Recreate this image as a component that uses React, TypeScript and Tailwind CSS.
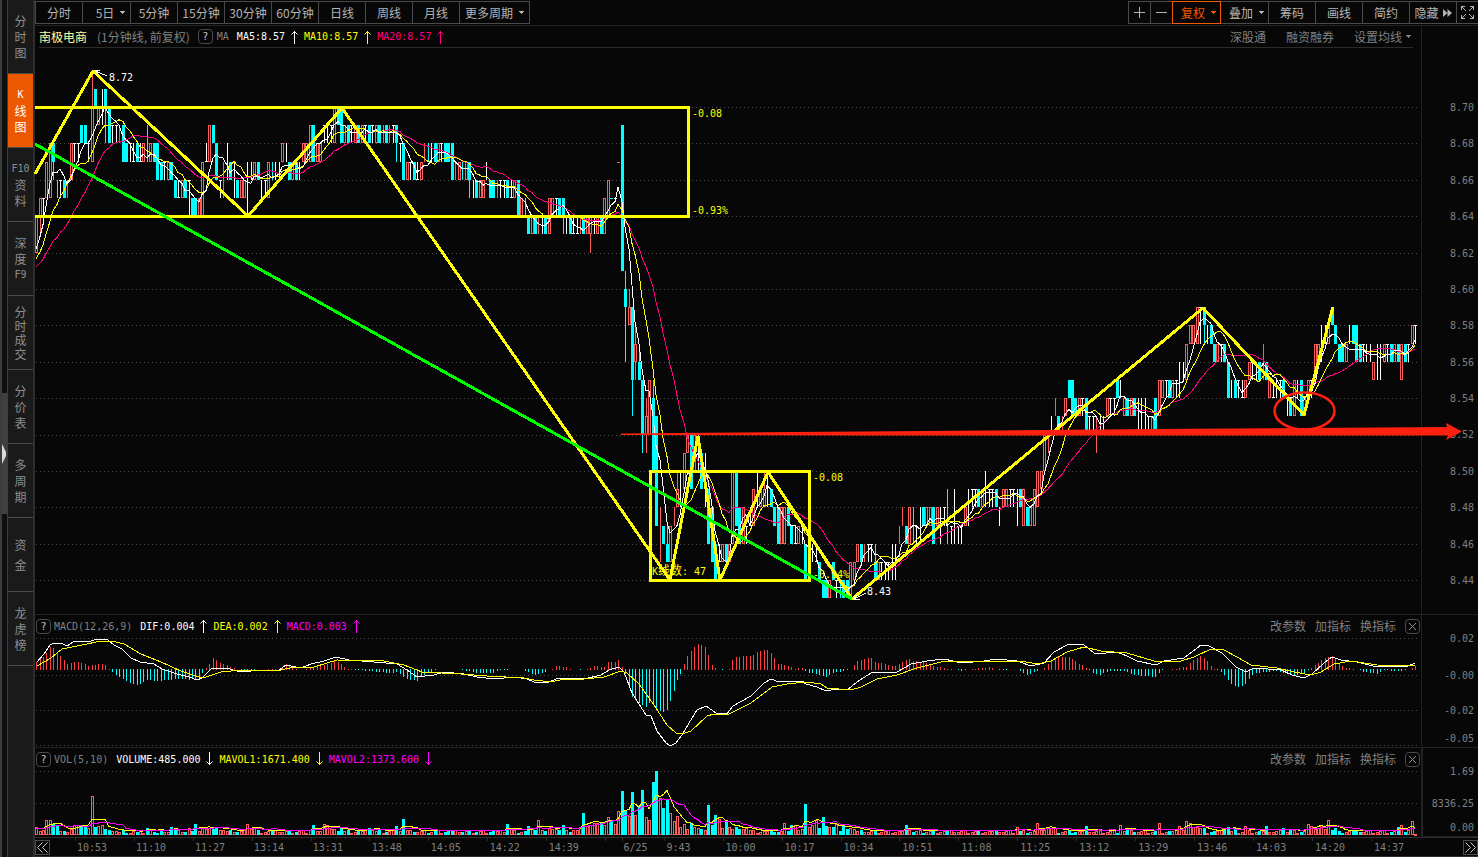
import React from 'react';

// Chart space: one unit is one pixel on a 1386 wide plot that starts at x = 35
const PLOT_X = 35;
const PLOT_W = 1386;
const PRICE_TOP = 48;
const PRICE_H = 566;
const MACD_TOP = 637;
const MACD_H = 110;
const VOL_TOP = 770;
const VOL_H = 67;

const UI = "font-['Noto_Sans_CJK_SC',sans-serif] text-xs";
const MONO = "font-['DejaVu_Sans_Mono','Noto_Sans_CJK_SC',monospace] text-[10px]";

type Point = [number, number];

interface Candle {
  kind: string;
  lo: number;
  hi: number;
  wickLo: number;
  wickHi: number;
  close: number;
}

// kind + low.high in cents above 8.40, optional +low.high for the wick
// r hollow up, h filled down, T/B doji with its bar at top/bottom, w/c/m plain lines
const CANDLES = `
r22.24 r24.25+23.25 T24.25 r25.27 r25.28 h27.28+26.28 c25.26 T25.26 h25.26 m25.26
r26.28 T27.28 T27.28 h28.29 h28.29 T27.28 r27.30+27.32 h30.31 r29.30 w29.31
h30.31+28.31 h28.30 T28.29 T28.29 m28.29 h27.29 h27.28 T27.28 B27.28 h27.28
B27.28 r27.28 c27.29 r27.28 h27.28 h26.28 h26.27 T26.27 r26.27 h26.27
h25.26 B25.26 r25.26 h25.26 T24.26 h24.25 h24.25 r24.25 r24.27 B27.28
r27.29 h28.29 h26.28 T25.26 m25.27 w26.28 h26.27 T25.27 h25.26 r25.26
r25.26 w24.27 w26.27 r26.27 h26.27 w25.26 T25.26 r25.27 c26.27 w26.27
B26.27 r27.28 w27.28 h26.27 r26.27 h26.27 w26.27 r27.28 r27.28 r27.29
h27.29 r27.28 r27.28 T28.29 T28.29 T28.29 r28.30 h29.30 h28.30 r28.29
h28.29 T28.29 r28.29 h28.29 r28.29 T28.29 h28.29 T28.29 r28.29 h28.29
m28.29 h28.29 m28.29 T28.29 h28.29+27.29 T27.28 h26.28 r26.27 T26.27 h26.27
B26.27 r26.27 m27.28 c27.28 w27.28 h27.28 r27.28 T27.28 h27.28 h27.28
h26.28 m26.27 r26.27 c26.27 r26.27 h26.27+25.27 w25.26 h25.26 r25.26 r25.26
w26.27 h25.26 h25.26 m25.26 T25.26 T25.26 h25.26 B25.26 r25.26 h24.26
r24.25 c24.25 h23.24 r23.24 h23.24 m23.24 w23.24 h23.24 r23.25 r24.25
T24.25 h24.25 h24.25+23.25 T23.24 h23.24 B23.24 B23.24 m23.24 h23.24 r23.24
r23.24+22.24 w23.24 r23.24 h23.24 r23.25 r24.26 c25.25 w25.25 m27.27 h21.29
h19.20+16.21 r18.19+18.20 h15.19+13.19 r16.17+15.18 h15.16+15.17 h12.15+11.15 r12.13+11.14 r12.15 h10.14+10.15 h7.13
m5.8 h6.7 h5.6+5.7 r5.7 m7.8 r8.9+8.10 w8.10 r9.11 r11.12 h9.12
r10.12 w10.12 h9.11 w8.11 h6.9 h5.8 h4.6 B5.6 r5.6 h5.6
r5.6 r6.10 h7.10 h6.8 r6.8 T6.7 B7.8 r7.9 w8.10 r8.9
r8.9+8.10 T8.10 h8.9 h7.8 h6.8 r6.8 r6.8 h7.8 h6.7 B6.7
r6.7 T6.7 h4.6 w4.6 w5.6 B5.6 h4.5 h3.4 h3.4 r3.4
h4.5 T3.4 c3.4 h3.4 h3.4 r3.5 r4.5 r5.6 h5.6 m5.6
T5.6 T5.6 h4.5+4.6 r4.5 T4.5 T4.5 T4.5 w4.6 w4.6 m6.7
m7.8 h6.7 r6.8 c6.8 T6.7 w6.8 h7.8 r7.8 r7.8 h6.8
r7.8 w6.8 T7.8 c6.9 T6.7 w6.9 T6.7 T6.7 r7.8 w7.9
T8.9 T8.9 h8.9 r8.9 w8.10 T8.9 T8.9 h8.9 w7.8 r8.9
r8.9 T8.9 T8.9 w7.9 h8.9 r7.9 h7.8 r7.8 r7.9 r8.10
r9.10 r10.12 m11.12 w12.13 m13.14 h12.13 m12.13 r13.14 h14.15 h13.15
h13.14 r13.14 T13.14 h12.14 T12.13 T12.13 m11.13 B12.13 B12.13 r13.14
T13.14 T13.14 h14.15 w14.15 r13.14 h13.14 r13.14 h13.14 w12.14 w12.14
w12.14 T12.13 r12.13 h12.14 r13.15 r14.15 T14.15 h14.15 r14.15 T14.15
w14.16 w15.16 r15.17 r17.18 r17.18 r17.19 T17.19 h18.19+17.19 w17.18 h17.18
h16.17 r16.17 T16.17 h16.17 h14.16 w14.15 h14.15 T14.15 B14.15 r14.15
r15.16 T15.16 w15.16 h15.16 m15.17 h15.16 r14.15 B14.15 w14.15 T14.15
h14.15 w13.14 h13.14 r13.15 w14.15 h13.15 r13.14 r14.15 T14.15 r15.17
r16.17 w16.18 w17.18 r17.18 h18.19 h17.18 h16.17 h16.17 r16.17 w17.18
h17.18 h16.18 h16.17 T16.17 w16.17 w16.17 r15.16 w15.17 w15.17 r16.17
T16.17 h16.17 r16.17 h16.17 r15.17 h16.17 T16.17 r17.18 T17.18
`;

const parseCandle = (token: string): Candle => {
  const kind = token[0];
  const [body, wick] = token.slice(1).split('+');
  const [lo, hi] = body.split('.').map(Number);
  const [wickLo, wickHi] = wick ? wick.split('.').map(Number) : [lo, hi];
  let close = (lo + hi) / 2;
  if ('rTm'.includes(kind)) close = hi;
  if ('hBc'.includes(kind)) close = lo;
  return { kind, lo, hi, wickLo, wickHi, close };
};

const candles = CANDLES.trim().split(/\s+/).map(parseCandle);

const barX = (i: number) => Math.floor(36.6 + i * 3.4645);
const priceY = (cents: number) => Math.round(107 + (30 - cents) * 18.2);

// closes before the first visible bar, so the averages have a history
const HISTORY = [
  20.7, 20.7, 20.7, 20.7, 20.7, 20.8, 20.8, 20.8, 20.8, 20.8,
  21.1, 21.1, 21.1, 21.1, 21.1, 21.6, 21.7, 21.8, 21.9,
];

const average = (values: number[], history: number[], span: number) => {
  const all = [...history, ...values];
  return values.map((_, i) => {
    const end = i + history.length + 1;
    const part = all.slice(Math.max(0, end - span), end);
    return part.reduce((sum, v) => sum + v, 0) / part.length;
  });
};

const closes = candles.map(c => c.close);
const maLine = (span: number) =>
  average(closes, HISTORY, span)
    .map((v, i) => `${barX(i)},${107 + (30 - v) * 18.2}`)
    .join(' ');

const DIF: Point[] = [
  [37, 662], [44, 654], [50, 645], [54, 643], [61, 643], [67, 646], [73, 642], [81, 641], [89, 642], [96, 639],
  [107, 639], [114, 645], [122, 649], [131, 658], [140, 662], [154, 664], [162, 669], [177, 674], [189, 677], [197, 680],
  [202, 678], [211, 669], [226, 668], [237, 671], [251, 671], [279, 670], [286, 665], [301, 668], [311, 664], [324, 661],
  [336, 657], [349, 660], [374, 662], [397, 664], [407, 670], [417, 677], [434, 675], [444, 672], [464, 674], [477, 677],
  [494, 679], [514, 677], [527, 679], [534, 682], [547, 683], [556, 679], [567, 678], [584, 679], [601, 675], [609, 670],
  [619, 667], [624, 672], [632, 693], [646, 715], [651, 716], [657, 731], [666, 743], [670, 746], [676, 743], [682, 735],
  [689, 723], [697, 710], [706, 706], [716, 713], [727, 714], [733, 706], [751, 696], [764, 683], [771, 679], [779, 682],
  [802, 681], [806, 684], [817, 687], [826, 691], [836, 689], [847, 690], [857, 682], [871, 673], [897, 672], [911, 664],
  [927, 661], [944, 659], [962, 663], [984, 661], [996, 659], [1017, 661], [1031, 666], [1044, 663], [1054, 652], [1069, 644],
  [1084, 645], [1094, 653], [1106, 653], [1117, 652], [1127, 656], [1137, 661], [1156, 665], [1164, 661], [1184, 658], [1201, 645],
  [1209, 646], [1222, 653], [1236, 667], [1246, 672], [1254, 668], [1281, 670], [1292, 675], [1304, 678], [1312, 674], [1324, 663],
  [1332, 657], [1341, 660], [1357, 662], [1377, 667], [1387, 666], [1406, 667], [1415, 663],
];

const DEA: Point[] = [
  [37, 666], [51, 658], [62, 649], [82, 645], [101, 641], [112, 641], [124, 644], [141, 654], [161, 662], [181, 671],
  [199, 677], [206, 677], [221, 672], [241, 670], [281, 670], [294, 667], [314, 667], [337, 660], [384, 661], [404, 665],
  [422, 672], [461, 674], [487, 676], [524, 678], [534, 680], [551, 682], [564, 679], [584, 679], [604, 677], [621, 671],
  [627, 673], [639, 684], [654, 705], [667, 725], [676, 733], [682, 734], [691, 731], [707, 716], [714, 714], [729, 714],
  [751, 703], [772, 687], [787, 684], [806, 682], [821, 684], [827, 688], [851, 690], [861, 687], [877, 679], [897, 675],
  [917, 668], [941, 662], [984, 661], [1021, 661], [1037, 664], [1051, 661], [1067, 652], [1084, 647], [1101, 651], [1127, 653],
  [1154, 661], [1181, 661], [1194, 657], [1211, 649], [1224, 650], [1237, 657], [1251, 665], [1277, 668], [1294, 672], [1311, 675],
  [1321, 672], [1334, 664], [1351, 661], [1377, 665], [1415, 666],
];

// histogram heights, positive above the zero line
const HIST: Point[] = [
  [36, 8], [43, 13], [50, 23], [54, 21], [61, 13], [67, 6], [75, 8], [82, 7], [88, 4], [94, 5], [101, 6], [107, 4],
  [110, -1], [118, -8], [131, -14], [138, -16], [148, -11], [158, -12], [170, -11], [180, -10], [190, -11], [198, -9],
  [205, 0], [213, 12], [218, 8], [226, 5], [240, -1], [252, -1], [270, 1], [280, 0], [286, 6], [293, 2], [302, -1],
  [310, 3], [322, 4], [335, 9], [339, 7], [346, 2], [356, -1], [380, -3], [390, -4], [398, -3], [405, -10], [417, -12],
  [423, -6], [437, 0], [460, 0], [475, -4], [494, -4], [500, -1], [520, 0], [534, -6], [545, -3], [556, 4], [566, 3],
  [570, 1], [580, -1], [595, 4], [603, 2], [608, 8], [615, 8], [619, 11], [624, -2], [632, -28], [645, -39], [651, -31],
  [657, -41], [663, -43], [667, -41], [670, -32], [674, -22], [677, -11], [681, -3], [684, 6], [688, 16], [695, 24],
  [698, 26], [706, 23], [708, 15], [712, 5], [716, 1], [720, -1], [729, 1], [733, 13], [751, 14], [761, 20], [767, 20],
  [771, 17], [778, 6], [787, 5], [794, 1], [802, 2], [806, -3], [817, -5], [826, -8], [831, -4], [846, -2], [851, 1],
  [857, 9], [870, 13], [874, 8], [894, 4], [909, 11], [914, 9], [924, 8], [934, 4], [949, 1], [961, -2], [967, 0],
  [989, 3], [1000, -1], [1017, 0], [1027, -6], [1037, -2], [1044, 2], [1051, 9], [1059, 13], [1069, 13], [1079, 6],
  [1085, 3], [1091, -3], [1099, -6], [1109, -2], [1124, -2], [1134, -6], [1156, -8], [1162, -1], [1174, 1], [1186, 3],
  [1194, 11], [1201, 14], [1207, 9], [1214, 1], [1222, -4], [1232, -16], [1240, -19], [1246, -14], [1254, -4],
  [1277, -2], [1292, -7], [1306, -3], [1309, 0], [1316, 6], [1326, 13], [1332, 14], [1339, 6], [1344, 2], [1354, 1],
  [1364, -3], [1377, -5], [1384, -1], [1397, -2], [1406, -1], [1409, 0], [1415, 4],
];

const sample = (points: Point[], x: number) => {
  const next = points.findIndex(p => p[0] >= x);
  if (next <= 0) return next === 0 ? points[0][1] : points[points.length - 1][1];
  const [x0, y0] = points[next - 1];
  const [x1, y1] = points[next];
  return y0 + ((y1 - y0) * (x - x0)) / (x1 - x0);
};

// runs of volume heights, keyed by the index of their first bar
const VOLUME_RUNS: Record<number, number[]> = {
  0: [8, 4, 5, 15, 15, 11, 9, 4, 4, 3, 6, 10, 10, 9, 8, 7, 39, 8, 9, 10, 6, 5, 4, 4, 3, 5, 2, 2, 4, 3, 4, 2, 7, 5, 3],
  36: [6, 3, 3, 8, 6, 5, 3, 3, 7, 4, 11, 4, 8, 6, 7, 6, 7, 5, 5],
  61: [11, 6, 7, 5],
  79: [5, 10, 4, 4, 11, 10, 6, 6, 4, 7],
  96: [7, 5],
  104: [9, 4, 16, 5, 5],
  136: [11, 6],
  142: [9, 6, 5, 15, 5, 4, 7, 6, 6, 5, 10, 5, 3, 5, 5, 8, 22, 9, 10, 12, 12, 13, 10, 18, 15, 11, 10],
  168: [24, 44, 24, 19, 43, 20, 29, 45, 18, 15, 53, 64, 37, 27, 36, 22, 14, 19, 8, 11, 6, 12, 8, 7, 6, 5, 30, 10, 20, 16, 7, 13, 8, 6, 8, 6, 6, 7, 5],
  216: [12, 4, 10, 10, 5, 6, 31, 8, 10, 15, 7, 18, 9, 8, 8, 11, 4, 10, 6, 7, 6],
  251: [10, 5],
  283: [8], 289: [12, 5, 5, 7, 7, 7], 303: [9], 313: [10, 4, 6], 324: [12],
  330: [9, 5, 14, 12, 8, 8, 7, 7], 343: [7, 8, 4, 7], 349: [9], 355: [9], 360: [7, 3, 5],
  367: [11, 9, 6, 7, 10, 6, 15, 5, 7, 4], 393: [8, 10, 3, 5, 14, 1],
};

const volumes = candles.map((_, i) => 2 + ((i * 29) % 13) / 4);
Object.entries(VOLUME_RUNS).forEach(([start, run]) => {
  run.forEach((v, k) => {
    volumes[Number(start) + k] = v;
  });
});

const volLine = (span: number) =>
  average(volumes, [5, 5, 5, 5, 5, 5, 5, 5, 5], span)
    .map((v, i) => `${barX(i)},${835 - v - 1}`)
    .join(' ');

const toPoints = (points: Point[]) => points.map(p => p.join(',')).join(' ');

const ZIGZAG = '35,174 93,71 248,216 342,108 670,580 698,436 720,580 768,472 852,599 1203,308 1304,415 1333,307';
const PRICES = ['8.70', '8.68', '8.66', '8.64', '8.62', '8.60', '8.58', '8.56', '8.54', '8.52', '8.50', '8.48', '8.46', '8.44'];

const SIDE_TABS = [
  { chars: ['分', '时', '图'], leading: 'leading-4' },
  { chars: ['K', '线', '图'], leading: 'leading-4' },
  { chars: ['F10', '资', '料'], leading: 'leading-4' },
  { chars: ['深', '度', 'F9'], leading: 'leading-4' },
  { chars: ['分', '时', '成', '交'], leading: 'leading-[14px]' },
  { chars: ['分', '价', '表'], leading: 'leading-4' },
  { chars: ['多', '周', '期'], leading: 'leading-4' },
  { chars: ['资', '金'], leading: 'leading-5' },
  { chars: ['龙', '虎', '榜'], leading: 'leading-4' },
];

const PERIODS = [
  { label: '分时', width: 'w-[47px]' },
  { label: '5日', width: 'w-12', menu: true },
  { label: '5分钟', width: 'w-[47px]' },
  { label: '15分钟', width: 'w-[47px]' },
  { label: '30分钟', width: 'w-[47px]' },
  { label: '60分钟', width: 'w-[47px]' },
  { label: '日线', width: 'w-[47px]' },
  { label: '周线', width: 'w-[47px]' },
  { label: '月线', width: 'w-[47px]' },
];

const TIMES = [
  { label: '10:53', grow: 'grow-[59]' }, { label: '11:10', grow: 'grow-[59]' }, { label: '11:27', grow: 'grow-[59]' },
  { label: '13:14', grow: 'grow-[59]' }, { label: '13:31', grow: 'grow-[59]' }, { label: '13:48', grow: 'grow-[59]' },
  { label: '14:05', grow: 'grow-[59]' }, { label: '14:22', grow: 'grow-[59]' }, { label: '14:39', grow: 'grow-[75]' },
  { label: '6/25', grow: 'grow-[43]' }, { label: '9:43', grow: 'grow-[59]' }, { label: '10:00', grow: 'grow-[59]' },
  { label: '10:17', grow: 'grow-[59]' }, { label: '10:34', grow: 'grow-[59]' }, { label: '10:51', grow: 'grow-[59]' },
  { label: '11:08', grow: 'grow-[59]' }, { label: '11:25', grow: 'grow-[59]' }, { label: '13:12', grow: 'grow-[59]' },
  { label: '13:29', grow: 'grow-[59]' }, { label: '13:46', grow: 'grow-[59]' }, { label: '14:03', grow: 'grow-[59]' },
  { label: '14:20', grow: 'grow-[59]' }, { label: '14:37', grow: 'grow-[59]' },
];

const TICKS = [75, 134, 193, 252, 311, 369, 428, 487, 546, 605, 622, 664, 723, 782, 841, 899, 958, 1017, 1076, 1135, 1194, 1253, 1312, 1371];

const Caret = () => (
  <svg width="5" height="3" viewBox="0 0 5 3" shapeRendering="crispEdges" className="shrink-0 fill-current">
    <path d="M0 0h5v1h-1v1h-1v1h-1v-1h-1v-1h-1z" />
  </svg>
);

const TrendArrow: React.FC<{ down?: boolean; className: string }> = ({ down, className }) => (
  <svg width="7" height="14" viewBox="0 0 7 14" fill="none" className={`shrink-0 stroke-current ${className}`}>
    <path d={down ? 'M3.5 0V13M0.5 9.5L3.5 12.5L6.5 9.5' : 'M3.5 1V14M0.5 4.5L3.5 1.5L6.5 4.5'} />
  </svg>
);

const HelpButton = () => (
  <button aria-label="帮助" className={`${MONO} flex size-[15px] shrink-0 items-center justify-center rounded-sm border border-[#4a4a4a] text-[#c8c8c8]`}>?</button>
);

const GridLines: React.FC<{ rows: number[] }> = ({ rows }) => (
  <g stroke="#4c4c4c" strokeDasharray="1 3">
    {rows.map(y => <line key={y} x1="36" x2="1418" y1={y + 0.5} y2={y + 0.5} />)}
  </g>
);

const CandleMark: React.FC<{ candle: Candle; x: number }> = ({ candle, x }) => {
  const { kind, lo, hi, wickLo, wickHi } = candle;
  const top = priceY(hi);
  const height = priceY(lo) - top;
  const color = 'rm'.includes(kind) ? '#ff5c5c' : 'hc'.includes(kind) ? '#00ffff' : '#ffffff';
  if (height === 0) return <rect x={x - 1} y={top} width="3" height="1" fill={color} />;
  if (kind === 'r') {
    return (
      <g fill="none" stroke={color}>
        <rect x={x - 0.5} y={top + 0.5} width="2" height={height - 1} />
        {wickHi > hi && <line x1={x + 0.5} x2={x + 0.5} y1={priceY(wickHi)} y2={top} />}
        {wickLo < lo && <line x1={x + 0.5} x2={x + 0.5} y1={top + height} y2={priceY(wickLo)} />}
      </g>
    );
  }
  return (
    <g fill={color}>
      {kind === 'h' && <rect x={x - 1} y={top} width="3" height={height} />}
      <rect x={x} y={priceY(wickHi)} width="1" height={priceY(wickLo) - priceY(wickHi)} />
      {kind === 'T' && <rect x={x - 1} y={top} width="3" height="1" />}
      {kind === 'B' && <rect x={x - 1} y={top + height - 1} width="3" height="1" />}
    </g>
  );
};

interface PlotLabelProps {
  x: number;
  y: number;
  color: string;
  children: React.ReactNode;
}

const PlotLabel: React.FC<PlotLabelProps> = ({ x, y, color, children }) => (
  <span
    className={`${MONO} absolute -translate-y-1/2 leading-none whitespace-nowrap ${color}`}
    style={{ left: `${((x - PLOT_X) / PLOT_W) * 100}%`, top: `${((y - PRICE_TOP) / PRICE_H) * 100}%` }}
  >
    {children}
  </span>
);

const PricePlot = () => (
  <div className="pointer-events-none relative z-10 min-h-0 flex-1">
    <PlotLabel x={652} y={571} color="text-[#ffff00]">K<span className="text-xs leading-none">线数</span>: 47</PlotLabel>
    <svg viewBox={`${PLOT_X} ${PRICE_TOP} ${PLOT_W} ${PRICE_H}`} preserveAspectRatio="none" shapeRendering="crispEdges" className="absolute inset-0 h-full w-full overflow-visible">
      <GridLines rows={PRICES.map((_, i) => priceY(30 - i * 2))} />
      {candles.map((candle, i) => <CandleMark key={i} candle={candle} x={barX(i)} />)}
      <g fill="none">
        <polyline points={maLine(20)} stroke="#ff0080" />
        <polyline points={maLine(10)} stroke="#ffff00" />
        <polyline points={maLine(5)} stroke="#ffffff" />
      </g>
      {/* Drawn trend lines and ranges */}
      <g fill="none" stroke="#ffff00" strokeWidth="3">
        <path d="M35 107.5H688.5V216.5H35" />
        <rect x="650.5" y="471.5" width="159" height="109" />
        <polyline points={ZIGZAG} strokeLinejoin="bevel" />
      </g>
      <path d="M35 144L852 599" stroke="#00ff00" strokeWidth="3" />
      <path d="M107 76L95 71M95 71l5-1M95 71l4 4M866 593L854 599M854 599l3-4M854 599l6 0" stroke="#ffffff" fill="none" />
      <g shapeRendering="auto">
        <ellipse cx="1304.5" cy="411" rx="30" ry="18.5" fill="none" stroke="#ff2010" strokeWidth="2.5" />
        <path d="M621 433.5L860 431.5L1150 429L1447 427L1446 423L1462 431.5L1446 440L1448 435.5H860L621 435Z" fill="#ff2010" />
      </g>
    </svg>
    <PlotLabel x={109} y={78} color="text-white">8.72</PlotLabel>
    <PlotLabel x={692} y={114} color="text-[#ffff00]">-0.08</PlotLabel>
    <PlotLabel x={692} y={211} color="text-[#ffff00]">-0.93%</PlotLabel>
    <PlotLabel x={813} y={478} color="text-[#ffff00]">-0.08</PlotLabel>
    <PlotLabel x={813} y={575} color="text-[#ffff00]">-0.94%</PlotLabel>
    <PlotLabel x={867} y={592} color="text-white">8.43</PlotLabel>
  </div>
);

const MacdPlot = () => (
  <svg viewBox={`${PLOT_X} ${MACD_TOP} ${PLOT_W} ${MACD_H}`} preserveAspectRatio="none" shapeRendering="crispEdges" className="h-[110px] w-full">
    <GridLines rows={[638, 675, 710, 745]} />
    {candles.map((_, i) => {
      const h = Math.round(sample(HIST, barX(i)));
      if (h === 0) return null;
      return <rect key={i} x={barX(i)} y={h > 0 ? 670 - h : 669} width="1" height={Math.abs(h)} fill={h > 0 ? '#ff4040' : '#00ffff'} />;
    })}
    <polyline points={toPoints(DIF)} fill="none" stroke="#ffffff" />
    <polyline points={toPoints(DEA)} fill="none" stroke="#ffff00" />
  </svg>
);

const VolumePlot = () => (
  <svg viewBox={`${PLOT_X} ${VOL_TOP} ${PLOT_W} ${VOL_H}`} preserveAspectRatio="none" shapeRendering="crispEdges" className="h-[67px] w-full">
    <GridLines rows={[771, 803, 834]} />
    {volumes.map((v, i) => {
      const h = Math.round(v);
      const falling = 'hc'.includes(candles[i].kind);
      return falling
        ? <rect key={i} x={barX(i) - 1} y={835 - h} width="3" height={h} fill="#00ffff" />
        : <rect key={i} x={barX(i) - 0.5} y={835.5 - h} width="2" height={Math.max(1, h - 1)} fill="none" stroke="#ff5c5c" />;
    })}
    <polyline points={volLine(5)} fill="none" stroke="#ffff00" />
    <polyline points={volLine(10)} fill="none" stroke="#ff00ff" />
  </svg>
);

const PanelActions = () => (
  <div className={`${UI} ml-auto flex items-center gap-[9px] text-[#808080]`}>
    <button>改参数</button>
    <button>加指标</button>
    <button>换指标</button>
    <button aria-label="关闭" className="flex size-[15px] items-center justify-center rounded-sm border border-[#4a4a4a]">
      <svg width="9" height="9" viewBox="0 0 9 9" className="stroke-[#909090]"><path d="M1 1l7 7M8 1l-7 7" /></svg>
    </button>
  </div>
);

const Sidebar = () => (
  <nav className="flex w-[27px] shrink-0 flex-col border-r-2 border-[#2e2e2e] bg-[#1a1a1a]">
    {SIDE_TABS.map((tab, i) => (
      <button
        key={i}
        className={`${UI} flex h-[74px] w-full shrink-0 flex-col items-center justify-center border-b border-[#4c4c4c] ${tab.leading} ${
          i === 1 ? 'bg-[#ec5800] text-white' : 'text-[#8e8e8e]'
        }`}
      >
        {tab.chars.map((char, k) => (
          <span key={k} className={char.charCodeAt(0) < 128 ? MONO + ' leading-4' : ''}>{char}</span>
        ))}
      </button>
    ))}
  </nav>
);

const Toolbar = () => (
  <header className="flex h-[26px] shrink-0 items-start justify-between border-b border-[#222222] pt-px">
    <div className="flex h-[23px] border border-[#4a4a4a]">
      {PERIODS.map(period => (
        <button key={period.label} className={`${UI} flex items-center justify-center gap-1.5 border-r border-[#4a4a4a] text-[#b4b4b4] ${period.width} ${period.menu ? 'pl-2' : ''}`}>
          {period.label}
          {period.menu && <Caret />}
        </button>
      ))}
      <button className={`${UI} flex w-[69px] items-center justify-center gap-1.5 text-[#b4b4b4]`}>更多周期<Caret /></button>
    </div>
    <div className="flex h-[23px] border border-r-0 border-[#4a4a4a] text-[#b4b4b4]">
      <button aria-label="放大" className="flex w-[22px] items-center justify-center border-r border-[#4a4a4a]">
        <svg width="11" height="11" viewBox="0 0 11 11" shapeRendering="crispEdges" className="stroke-current"><path d="M5.5 0v11M0 5.5h11" /></svg>
      </button>
      <button aria-label="缩小" className="flex w-[21px] items-center justify-center">
        <svg width="11" height="11" viewBox="0 0 11 11" shapeRendering="crispEdges" className="stroke-current"><path d="M0 5.5h11" /></svg>
      </button>
      <button className={`${UI} -my-px flex w-[49px] items-center justify-center gap-1.5 border border-[#f05a00] pl-1 text-[#f05a00]`}>复权<Caret /></button>
      <button className={`${UI} flex w-12 items-center justify-center gap-1.5 border-r border-[#4a4a4a] pl-1`}>叠加<Caret /></button>
      <button className={`${UI} w-[47px] border-r border-[#4a4a4a]`}>筹码</button>
      <button className={`${UI} w-[47px] border-r border-[#4a4a4a]`}>画线</button>
      <button className={`${UI} w-[47px] border-r border-[#4a4a4a]`}>简约</button>
      <button className={`${UI} flex w-[47px] items-center justify-center gap-1 border-r border-[#4a4a4a]`}>
        隐藏
        <svg width="9" height="8" viewBox="0 0 9 8" className="fill-current"><path d="M0 0l4.5 4L0 8zM4.5 0L9 4L4.5 8z" /></svg>
      </button>
      <button aria-label="全屏" className="flex w-[21px] items-center justify-center">
        <svg width="13" height="13" viewBox="0 0 13 13" shapeRendering="crispEdges" fill="none" className="stroke-current">
          <path d="M0.5 4V0.5H4M9 0.5h3.5V4M12.5 9v3.5H9M4 12.5H0.5V9M1 1l4 4M12 1l-4 4M12 12l-4-4M1 12l4-4" />
        </svg>
      </button>
    </div>
  </header>
);

export default function App() {
  return (
    <div className="flex h-screen min-h-[700px] overflow-hidden bg-[#070707]">
      {/* Drawer handle */}
      <div className="flex w-2 shrink-0 flex-col border-r border-l-2 border-[#3c3c3c] bg-[#0e0f10]">
        <div className="flex-[393]" />
        <button aria-label="展开" className="flex flex-[121] items-center bg-[#404040]">
          <svg width="5" height="20" viewBox="0 0 5 20" className="shrink-0 fill-[#d8d8d8]"><path d="M0 0L4 8v4L0 20z" /></svg>
        </button>
        <div className="flex-[343]" />
      </div>
      <Sidebar />
      <main className="flex min-w-0 flex-1 flex-col">
        <Toolbar />

        {/* Price */}
        <section className="flex min-h-0 flex-1">
          <div className="flex min-w-0 flex-1 flex-col">
            <div className="mr-2 ml-1 flex h-[22px] shrink-0 items-center border-b border-[#2b2b2b]">
              <h1 className={`${UI} shrink-0 text-[#ffffa0]`}>南极电商</h1>
              <span className={`${UI} ml-2.5 shrink-0 text-[#808080]`}>(1分钟线, 前复权)</span>
              <span className="ml-2 flex"><HelpButton /></span>
              <div className={`${MONO} ml-1 flex items-center whitespace-nowrap`}>
                <span className="text-[#808080]">MA</span>
                <span className="ml-2 text-white">MA5:8.57</span>
                <TrendArrow className="mx-[6px] text-white" />
                <span className="text-[#ffff00]">MA10:8.57</span>
                <TrendArrow className="mx-[6px] text-[#ffff00]" />
                <span className="text-[#ff0080]">MA20:8.57</span>
                <TrendArrow className="mx-[6px] text-[#ff0080]" />
              </div>
              <div className={`${UI} ml-auto flex items-center gap-5 pr-0.5 text-[#808080]`}>
                <button>深股通</button>
                <button>融资融券</button>
                <button className="flex items-center gap-1">设置均线<Caret /></button>
              </div>
            </div>
            <PricePlot />
          </div>
          <div className={`${MONO} flex w-[57px] shrink-0 flex-col items-end justify-between border-l border-[#222222] pt-[75px] pr-1 pb-[26px] text-[#808080]`}>
            {PRICES.map(price => <span key={price} className="leading-[14px]">{price}</span>)}
          </div>
        </section>

        {/* MACD */}
        <section className="flex shrink-0 border-t border-[#222222]">
          <div className="flex min-w-0 flex-1 flex-col">
            <div className={`${MONO} mx-px flex h-[22px] items-center whitespace-nowrap`}>
              <HelpButton />
              <span className="ml-[3px] text-[#808080]">MACD(12,26,9)</span>
              <span className="ml-2 text-white">DIF:0.004</span>
              <TrendArrow className="mx-[6px] text-white" />
              <span className="text-[#ffff00]">DEA:0.002</span>
              <TrendArrow className="mx-[6px] text-[#ffff00]" />
              <span className="text-[#ff00ff]">MACD:0.003</span>
              <TrendArrow className="mx-[6px] text-[#ff00ff]" />
              <PanelActions />
            </div>
            <MacdPlot />
          </div>
          <div className={`${MONO} flex w-[57px] shrink-0 flex-col items-end border-l border-[#222222] pt-[17px] pr-1 leading-[14px] text-[#808080]`}>
            <span>0.02</span>
            <span className="mt-[23px]">-0.00</span>
            <span className="mt-[21px]">-0.02</span>
            <span className="mt-[14px]">-0.05</span>
          </div>
        </section>

        {/* Volume */}
        <section className="flex shrink-0 border-t border-[#222222]">
          <div className="flex min-w-0 flex-1 flex-col">
            <div className={`${MONO} mx-px flex h-[22px] items-center whitespace-nowrap`}>
              <HelpButton />
              <span className="ml-[3px] text-[#808080]">VOL(5,10)</span>
              <span className="ml-2 text-white">VOLUME:485.000</span>
              <TrendArrow down className="mx-[6px] text-white" />
              <span className="text-[#ffff00]">MAVOL1:1671.400</span>
              <TrendArrow down className="mx-[6px] text-[#ffff00]" />
              <span className="text-[#ff00ff]">MAVOL2:1373.600</span>
              <TrendArrow down className="mx-[6px] text-[#ff00ff]" />
              <PanelActions />
            </div>
            <VolumePlot />
          </div>
          <div className={`${MONO} flex w-[57px] shrink-0 flex-col items-end border-b border-l-2 border-[#222222] pt-[17px] pr-1 leading-[14px] text-[#808080]`}>
            <span>1.69</span>
            <span className="mt-[18px]">8336.25</span>
            <span className="mt-[10px]">0.00</span>
          </div>
        </section>

        {/* Time axis */}
        <footer className="relative flex h-5 shrink-0 items-center border-t border-b border-[#2e2e2e]">
          <svg viewBox={`${PLOT_X} 837 1443 4`} preserveAspectRatio="none" shapeRendering="crispEdges" className="absolute inset-x-0 top-0 h-1 w-full stroke-[#2e2e2e]">
            {TICKS.map(x => <line key={x} x1={x + 0.5} x2={x + 0.5} y1="837" y2="840" />)}
          </svg>
          <button aria-label="向前" className="flex size-[15px] shrink-0 items-center justify-center border border-[#4a4a4a]">
            <svg width="11" height="11" viewBox="0 0 11 11" fill="none" className="stroke-[#c8c8c8]"><path d="M5.5 0.5l-5 5l5 5M10.5 0.5l-5 5l5 5" /></svg>
          </button>
          <div className={`${MONO} ml-[27px] flex min-w-0 flex-1 pr-[30px] text-[#808080]`}>
            {TIMES.map(time => <span key={time.label} className={`${time.grow} w-0 basis-0`}>{time.label}</span>)}
          </div>
          <button aria-label="向后" className="flex size-[15px] shrink-0 items-center justify-center border border-[#4a4a4a]">
            <svg width="11" height="11" viewBox="0 0 11 11" fill="none" className="stroke-[#c8c8c8]"><path d="M0.5 0.5l5 5l-5 5M5.5 0.5l5 5l-5 5" /></svg>
          </button>
        </footer>
      </main>
    </div>
  );
}
